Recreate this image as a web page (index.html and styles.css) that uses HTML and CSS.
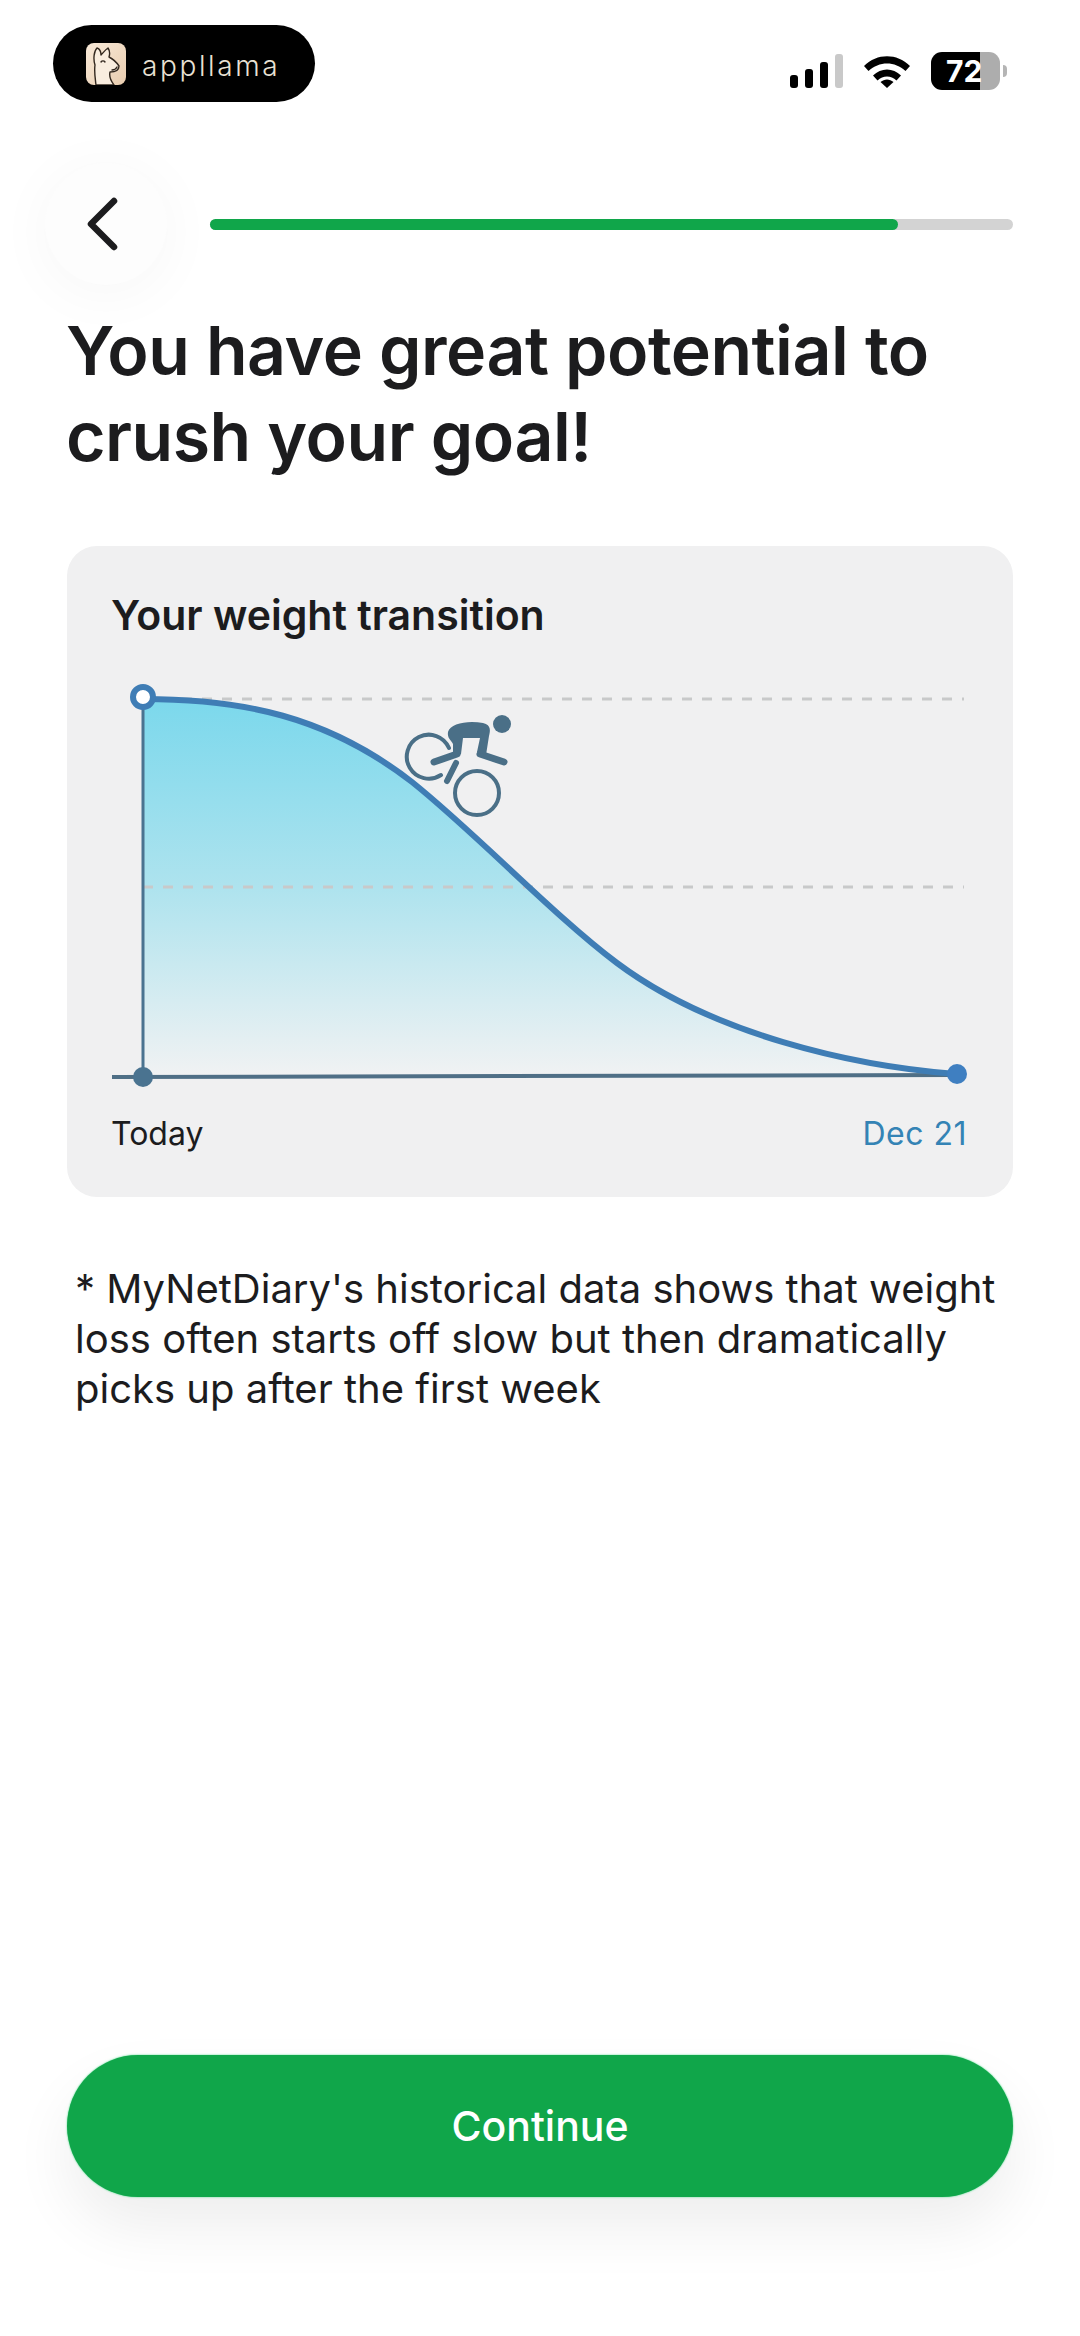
FILE: index.html
```html
<!DOCTYPE html>
<html lang="en">

<head>
  <meta charset="UTF-8">
  <title>Weight transition</title>
  <link rel="stylesheet" href="styles.css">
</head>

<body>
  <div class="status-bar">
    <div class="brand-pill">
      <svg class="brand-logo" viewBox="0 0 40 42">
        <defs>
          <linearGradient id="tileFill" x1="0" y1="0" x2="1" y2="1">
            <stop offset="0" stop-color="#f8e9d8" />
            <stop offset="1" stop-color="#e9cdaf" />
          </linearGradient>
        </defs>
        <rect width="40" height="42" rx="8" fill="url(#tileFill)" />
        <path d="M10 42C9 34 8 28 9 22C7 16 8 8 11 5C14 6 15 9 15 12C17 10 19 7 22 5C24 8 24 11 23 14C27 16 31 20 33 23C33 27 29 29 24 29C23 33 25 38 28 42Z" fill="#f9eddf" stroke="#33281f" stroke-width="1.400" stroke-linejoin="round" />
        <path d="M15 19c1-1.500 3-1.500 4 0M26 27c2 0 4-1 5-3" fill="none" stroke="#33281f" stroke-width="1.400" stroke-linecap="round" />
      </svg>
      <span class="brand-name">appllama</span>
    </div>
    <div class="status-icons">
      <div class="signal">
        <span class="bar bar-1"></span>
        <span class="bar bar-2"></span>
        <span class="bar bar-3"></span>
        <span class="bar bar-4"></span>
      </div>
      <svg class="wifi" viewBox="0 0 46 34">
        <path d="M0 12C13-1 33-1 46 12l-4.500 5C31 7 15 7 4.500 17z" />
        <path d="M9 21.500c8-8 20-8 28 0l-4.500 5c-5.500-5.500-13.500-5.500-19 0z" />
        <path d="M16.500 28c4-3.500 9-3.500 13 0L23 34z" />
      </svg>
      <div class="battery">
        <div class="battery-body"><span class="battery-level">72</span></div>
        <span class="battery-tip"></span>
      </div>
    </div>
  </div>

  <div class="nav-row">
    <button class="back-btn">
      <svg viewBox="0 0 32 54" class="back-icon">
        <path d="M28 4 5 27l23 23" fill="none" stroke="#1c1c1e" stroke-width="6.500" stroke-linecap="round" stroke-linejoin="round" />
      </svg>
    </button>
    <div class="progress">
      <div class="progress-fill"></div>
    </div>
  </div>

  <h1 class="title">You have great potential to crush your goal!</h1>

  <div class="card">
    <h2 class="card-title">Your weight transition</h2>
    <svg class="chart" viewBox="0 0 880 420">
      <defs>
        <linearGradient id="areaFill" x1="0" y1="0" x2="0" y2="1">
          <stop offset="0" stop-color="#7bd8ec" />
          <stop offset="0.5" stop-color="#aee3ee" />
          <stop offset="1" stop-color="#f1f2f3" />
        </linearGradient>
      </defs>
      <!-- area + curve -->
      <path d="M31 25C130 25 215 42 300 108C365 160 440 240 505 289C600 360 740 392 844 400L31 403Z" fill="url(#areaFill)" />
      <!-- guide lines -->
      <line class="guide" x1="70" y1="25" x2="852" y2="25" />
      <line class="guide" x1="31" y1="213" x2="852" y2="213" />
      <line class="axis" x1="31" y1="20" x2="31" y2="402" />
      <line class="axis-h" x1="0" y1="403" x2="844" y2="401" />
      <path class="curve" d="M31 25C130 25 215 42 300 108C365 160 440 240 505 289C600 360 740 392 844 400" />
      <circle cx="31" cy="23" r="10" fill="#fff" stroke="#3f7db5" stroke-width="6" />
      <circle cx="31" cy="403" r="10" fill="#4a7390" />
      <circle cx="845" cy="400" r="10" fill="#3f7fc1" />
      <!-- cyclist -->
      <g transform="translate(-1 -2)">
        <g fill="none" stroke="#4a6f87" stroke-linecap="round">
          <path d="M338 76A22 22 0 1 0 330 103" stroke-width="4" />
          <circle cx="366" cy="121" r="22" stroke-width="4" />
          <path d="M345 91 336 109" stroke-width="6" />
          <path d="M323 90 346 82" stroke-width="7" />
          <path d="M369 82 393 90" stroke-width="7" />
        </g>
        <path d="M337 60C339 51 358 48 372 51C381 53 379 60 378 64L375 83 366 80 369 66 352 66 350 82 342 85 342 72C340 68 336 66 337 60Z" fill="#4a6f87" />
        <circle cx="391" cy="52" r="9" fill="#4a6f87" />
      </g>
    </svg>
    <div class="chart-labels">
      <span>Today</span>
      <span class="end-date">Dec 21</span>
    </div>
  </div>

  <p class="note">* MyNetDiary's historical data shows that weight loss often starts off slow but then dramatically picks up after the first week</p>

  <button class="continue-btn">Continue</button>
</body>

</html>
```

FILE: styles.css
```css
* {
  box-sizing: border-box;
}

body {
  margin: 0;
  width: 1080px;
  height: 2336px;
  padding: 25px 67px 139px;
  display: flex;
  flex-direction: column;
  background-color: #ffffff;
  color: #1c1c1e;
  font-family: Inter, "Noto Sans", sans-serif;
}

/* Status bar */
.status-bar {
  display: flex;
  justify-content: space-between;
  margin-left: -14px;
  height: 77px;
}

.brand-pill {
  width: 262px;
  height: 77px;
  border-radius: 39px;
  background-color: #000000;
  display: flex;
  align-items: center;
  gap: 16px;
  padding-left: 33px;
}

.brand-logo {
  width: 40px;
  height: 42px;
}

.brand-name {
  margin-top: 4px;
  color: #e9e1d4;
  font-weight: 300;
  font-size: 28px;
  letter-spacing: 2.6px;
}

.status-icons {
  display: flex;
  align-items: flex-start;
  margin-top: 27px;
  margin-right: 6px;
}

.signal {
  display: flex;
  align-items: flex-end;
  gap: 7px;
  height: 34px;
  margin-top: 2px;
}

.bar {
  width: 8px;
  border-radius: 3px;
  background-color: #000000;
}

.bar-1 { height: 13px; }
.bar-2 { height: 19px; }
.bar-3 { height: 26px; }
.bar-4 { height: 34px; background-color: #c9c9c9; }

.wifi {
  width: 46px;
  height: 34px;
  margin: 2px 21px 0;
  fill: #000000;
}

.battery {
  display: flex;
  align-items: center;
  width: 76px;
}

.battery-body {
  width: 69px;
  height: 38px;
  border-radius: 11px;
  background: linear-gradient(90deg, #000000 71%, #adadad 71%);
  color: #ffffff;
  font-size: 30px;
  font-weight: 700;
  line-height: 38px;
  padding-left: 15px;
}

.battery-tip {
  width: 4px;
  height: 12px;
  margin-left: 3px;
  border-radius: 0 6px 6px 0;
  background-color: #b5b5b5;
}

/* Back + progress */
.nav-row {
  display: flex;
  align-items: center;
  margin: 61px 0 0 -22px;
}

.back-btn {
  width: 122px;
  height: 122px;
  flex-shrink: 0;
  border: none;
  border-radius: 50%;
  background-color: #fdfdfd;
  box-shadow: 0 8px 60px rgba(0, 0, 0, 0.04);
  display: flex;
  align-items: center;
  justify-content: center;
  padding: 0 8px 0 0;
}

.back-icon {
  width: 32px;
  height: 54px;
}

.progress {
  flex: 1;
  height: 11px;
  margin-left: 43px;
  border-radius: 6px;
  background-color: #d3d3d3;
}

.progress-fill {
  width: 688px;
  height: 100%;
  border-radius: 6px;
  background-color: #10a64a;
}

.title {
  margin: 22px 0 0 -1px;
  font-size: 68px;
  font-weight: 600;
  line-height: 86px;
  letter-spacing: -0.5px;
}

/* Chart card */
.card {
  margin-top: 67px;
  height: 651px;
  padding: 46px 44px 0;
  border-radius: 30px;
  background-color: #f0f0f1;
}

.card-title {
  margin: 0;
  font-size: 41px;
  font-weight: 600;
  line-height: 46px;
}

.chart {
  display: block;
  width: 880px;
  height: 420px;
  margin: 36px 0 0 1px;
}

.guide {
  stroke: #c8c9ca;
  stroke-width: 3;
  stroke-dasharray: 10 10;
}

.axis {
  stroke: #4a7390;
  stroke-width: 3;
}

.axis-h {
  stroke: #4f6f86;
  stroke-width: 4;
}

.curve {
  fill: none;
  stroke: #3f7db5;
  stroke-width: 6;
}

.chart-labels {
  display: flex;
  justify-content: space-between;
  margin-top: 20px;
  width: 856px;
  font-size: 32px;
  line-height: 40px;
}

.end-date {
  color: #3483b5;
  letter-spacing: 0.5px;
}

.note {
  margin: 67px 0 0;
  padding: 0 8px;
  font-size: 40px;
  line-height: 50px;
}

.continue-btn {
  margin-top: auto;
  height: 142px;
  flex-shrink: 0;
  border: none;
  border-radius: 71px;
  background-color: #10a64a;
  box-shadow: 0 0 2px #45d884, 0 30px 60px rgba(0, 0, 0, 0.07);
  color: #ffffff;
  font-family: Inter, "Noto Sans", sans-serif;
  font-size: 41px;
  font-weight: 500;
}
```
